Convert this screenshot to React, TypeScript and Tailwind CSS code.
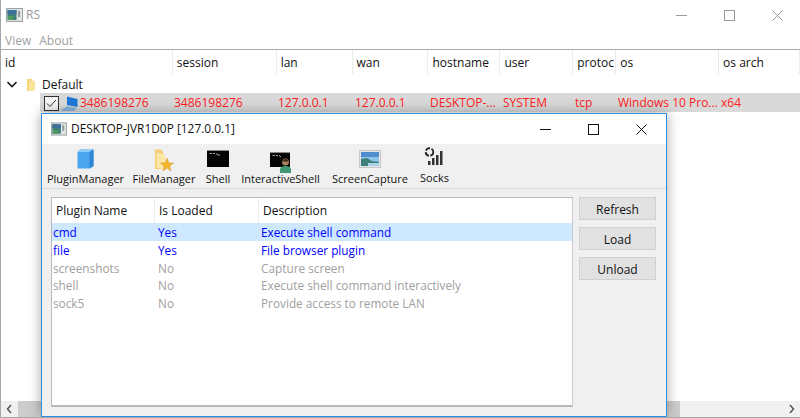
import * as React from 'react';

const FONT = "font-['Open_Sans','Noto_Sans',sans-serif]";

const hostColumns = [
  { label: 'id', width: 'w-[172px]' },
  { label: 'session', width: 'w-[104px]' },
  { label: 'lan', width: 'w-[76px]' },
  { label: 'wan', width: 'w-[76px]' },
  { label: 'hostname', width: 'w-[72px]' },
  { label: 'user', width: 'w-[73px]' },
  { label: 'protoc', width: 'w-[43px]' },
  { label: 'os', width: 'w-[103px]' },
  { label: 'os arch', width: 'w-[81px]' },
];

const plugins = [
  { name: 'cmd', loaded: true, description: 'Execute shell command', selected: true },
  { name: 'file', loaded: true, description: 'File browser plugin' },
  { name: 'screenshots', loaded: false, description: 'Capture screen' },
  { name: 'shell', loaded: false, description: 'Execute shell command interactively' },
  { name: 'sock5', loaded: false, description: 'Provide access to remote LAN' },
];

function AppIcon({ className }: { className?: string }) {
  return (
    <svg viewBox="0 0 17 14" className={className}>
      <rect x="0.5" y="0.5" width="16" height="13" fill="#dfe3e3" stroke="#9aa2a2" />
      <rect x="1.5" y="2" width="9" height="10" fill="#3f7f78" />
      <rect x="1.5" y="2" width="9" height="4" fill="#3c6f9c" />
      <rect x="2" y="8" width="5" height="4" fill="#4f9a5c" />
      <rect x="12" y="3" width="2" height="6" fill="#8f9a9a" />
    </svg>
  );
}

function WindowControls({ active }: { active?: boolean }) {
  const stroke = active ? '#111111' : '#999999';
  return (
    <div className="flex items-center">
      <svg width="11" height="11" viewBox="0 0 11 11" className="mr-[37px]">
        <path d="M0 5.5H11" stroke={stroke} />
      </svg>
      <svg width="11" height="11" viewBox="0 0 11 11" className="mr-[37px]">
        <rect x="0.5" y="0.5" width="10" height="10" fill="none" stroke={stroke} />
      </svg>
      <svg width="11" height="11" viewBox="0 0 11 11">
        <path d="M0.5 0.5L10.5 10.5M10.5 0.5L0.5 10.5" stroke={stroke} />
      </svg>
    </div>
  );
}

function FolderIcon() {
  return (
    <svg width="10" height="14" viewBox="0 0 10 14">
      <path d="M1 1H6L7 3V13H1Z" fill="#f6d77a" />
      <path d="M3 3H9V12L3 13Z" fill="#fbe39a" />
    </svg>
  );
}

function CubeIcon() {
  return (
    <svg width="17" height="20" viewBox="0 0 17 20">
      <path d="M0.5 3L3.5 0.5H16.5V17L13 19.5H0.5Z" fill="#4aa6ee" />
      <path d="M12.5 3H0.5L3.5 0.5H16.5Z" fill="#8ccbf6" />
      <path d="M12.5 3L16.5 0.5V17L12.5 19.5Z" fill="#2f86d6" />
    </svg>
  );
}

function StarFolderIcon() {
  return (
    <svg width="20" height="23" viewBox="0 0 20 23">
      <path d="M1 0.5H7L9 3V20H1Z" fill="#f3cf71" />
      <path d="M2.5 3L11 6V21L2.5 18Z" fill="#fbe6a6" />
      <path d="M13 9L14.7 14H19.5L15.6 17L17 22L13 19L9 22L10.4 17L6.5 14H11.3Z" fill="#f5b62d" stroke="#d98c1c" strokeWidth="0.5" />
    </svg>
  );
}

function TerminalIcon() {
  return (
    <svg width="22" height="17" viewBox="0 0 22 17">
      <rect x="0" y="0" width="22" height="17" fill="#050505" />
      <rect x="0" y="0" width="22" height="1" fill="#8a8a8a" />
      <path d="M2.5 3.5H5M6 3.5H8M9 3.5L11 5H13" stroke="#cfcfcf" strokeWidth="0.8" fill="none" />
    </svg>
  );
}

function InteractiveShellIcon() {
  return (
    <svg width="22" height="21" viewBox="0 0 22 21">
      <rect x="0" y="0" width="20" height="15" fill="#050505" />
      <rect x="0" y="0" width="20" height="1" fill="#8a8a8a" />
      <path d="M2.5 3.5H5M6 3.5H8M9 3.5L11 5" stroke="#cfcfcf" strokeWidth="0.8" fill="none" />
      <circle cx="15.5" cy="10" r="3.5" fill="#a97f5f" />
      <path d="M12 9.5C12 6 19 6 19 9.5Z" fill="#3b2a1f" />
      <path d="M10 21V17.5C10 15 12.5 14 15.5 14C18.5 14 21 15 21 17.5V21Z" fill="#3f9a75" />
    </svg>
  );
}

function PictureIcon() {
  return (
    <svg width="22" height="18" viewBox="0 0 22 18">
      <rect x="0.5" y="0.5" width="21" height="17" fill="#e4e4e4" stroke="#c8c8c8" />
      <rect x="2" y="2" width="18" height="14" fill="#8ec4ea" />
      <rect x="2" y="2" width="18" height="5" fill="#4f8fd0" />
      <path d="M2 9L8 8L13 11L20 12V16H2Z" fill="#3f7f7a" />
      <path d="M9 13H20V16H9Z" fill="#a7d2e8" />
    </svg>
  );
}

function SocksIcon() {
  return (
    <svg width="22" height="18" viewBox="0 0 22 18">
      <circle cx="5.5" cy="5" r="3.8" fill="none" stroke="#222222" strokeWidth="1.8" strokeDasharray="5 1.5" />
      <rect x="4" y="14" width="2.5" height="4" fill="#333333" />
      <rect x="8" y="11" width="2.5" height="7" fill="#333333" />
      <rect x="12" y="8" width="2.5" height="10" fill="#333333" />
      <rect x="16" y="4" width="2.5" height="14" fill="#333333" />
    </svg>
  );
}

function ToolButton({ label, className, iconTop, children }: { label: string; className: string; iconTop: string; children: React.ReactNode }) {
  return (
    <div className={`flex flex-col items-center ${className}`}>
      <div className={`flex h-[27px] items-start justify-center ${iconTop}`}>{children}</div>
      <span className="whitespace-nowrap text-[11px] leading-[16px] text-[#111]">{label}</span>
    </div>
  );
}

function PluginDialog() {
  return (
    <div className="absolute left-[40px] top-[113px] flex h-[304px] w-[626px] flex-col border border-[#2f8fdc] bg-[#f0f0f0] shadow-[0_0_12px_rgba(0,0,0,0.35)]">
      <div className="flex h-[30px] shrink-0 items-center bg-white pl-[9px] pr-[19px]">
        <AppIcon className="h-[14px] w-[16px]" />
        <span className="ml-[4px] text-[11.9px] text-[#111]">DESKTOP-JVR1D0P [127.0.0.1]</span>
        <div className="ml-auto">
          <WindowControls active />
        </div>
      </div>

      <div className="flex h-[45px] shrink-0 border-b border-[#d8d8d8] pl-[6px]">
        <ToolButton label="PluginManager" className="w-[75px]" iconTop="pt-[5px]"><CubeIcon /></ToolButton>
        <ToolButton label="FileManager" className="ml-[11px] w-[60px]" iconTop="pt-[5px]"><StarFolderIcon /></ToolButton>
        <ToolButton label="Shell" className="ml-[12px] w-[24px]" iconTop="pt-[6px]"><TerminalIcon /></ToolButton>
        <ToolButton label="InteractiveShell" className="ml-[11px] w-[79px]" iconTop="pt-[8px]"><InteractiveShellIcon /></ToolButton>
        <ToolButton label="ScreenCapture" className="ml-[12px] w-[76px]" iconTop="pt-[6px]"><PictureIcon /></ToolButton>
        <ToolButton label="Socks" className="ml-[11px] w-[31px] -translate-y-px" iconTop="pt-[4px]"><SocksIcon /></ToolButton>
      </div>

      <div className="flex min-h-0 flex-1 pb-[10px] pl-[9px] pt-[8px]">
        <div className="h-[210px] w-[522px] border border-[#b9b9b9] border-b-2 border-r-[#cccccc] bg-white">
          <div className="flex h-[25px] items-center text-[12px] text-[#111]">
            <div className="h-full w-[103px] border-r border-[#ececec] pl-[4px] leading-[25px]">Plugin Name</div>
            <div className="h-full w-[104px] border-r border-[#ececec] pl-[4px] leading-[25px]">Is Loaded</div>
            <div className="h-full pl-[4px] leading-[25px]">Description</div>
          </div>
          {plugins.map((plugin) => (
            <div
              key={plugin.name}
              className={`flex h-[17.7px] items-center pt-[2px] text-[11.8px] leading-[15px] ${plugin.selected ? 'bg-[#cde8ff]' : ''} ${plugin.loaded ? 'text-[#0000ff]' : 'text-[#a0a0a0]'}`}
            >
              <div className="w-[104px] pl-[1px]">{plugin.name}</div>
              <div className="w-[103px] pl-[2px]">{plugin.loaded ? 'Yes' : 'No'}</div>
              <div className="pl-[2px]">{plugin.description}</div>
            </div>
          ))}
        </div>
        <div className="ml-[6px] flex flex-col gap-[7px]">
          {['Refresh', 'Load', 'Unload'].map((label) => (
            <button
              key={label}
              type="button"
              className="h-[23px] w-[77px] border border-[#d0d0d0] bg-[#e1e1e1] pt-[2px] text-[12px] leading-[17px] text-[#111]"
            >
              {label}
            </button>
          ))}
        </div>
      </div>
    </div>
  );
}

export default function App() {
  return (
    <div className={`relative flex h-[418px] w-[800px] flex-col overflow-hidden border-b border-l border-[#a6a6a6] bg-white ${FONT}`}>
      <div className="flex h-[30px] shrink-0 items-center pl-[5px] pr-[17px]">
        <AppIcon className="h-[14px] w-[17px]" />
        <span className="ml-[3px] text-[12px] text-[#999]">RS</span>
        <div className="ml-auto">
          <WindowControls />
        </div>
      </div>

      <div className="flex h-[19px] shrink-0 items-center gap-[8px] pl-[4px] pt-[2px] text-[12px] text-[#a0a0a0]">
        <span>View</span>
        <span>About</span>
      </div>

      <div className="flex min-h-0 flex-1 flex-col border-t border-[#a9a9a9]">
        <div className="flex h-[24px] shrink-0 text-[12px] text-[#111]">
          {hostColumns.map((column) => (
            <div key={column.label} className={`${column.width} h-full border-r border-[#ececec] pl-[4px] leading-[26px]`}>
              {column.label}
            </div>
          ))}
        </div>

        <div className="flex h-[19px] shrink-0 items-center pl-[6px] pt-[2px] text-[12px] text-[#111]">
          <svg width="10" height="7" viewBox="0 0 10 7">
            <path d="M0.5 1L5 5.5L9.5 1" fill="none" stroke="#222222" strokeWidth="1.6" />
          </svg>
          <div className="ml-[9px]"><FolderIcon /></div>
          <span className="ml-[6px]">Default</span>
        </div>

        <div className="flex h-[19px] shrink-0 items-center">
          <div className="h-full w-[39px] shrink-0" />
          <div className="flex h-full flex-1 items-center bg-[#d9d9d9] pl-[4px] pt-[1px] text-[12px] text-[#ff2020]">
            <div className="flex w-[130px] items-center">
              <svg width="15" height="15" viewBox="0 0 15 15" className="shrink-0">
                <rect x="0.5" y="0.5" width="14" height="14" fill="#f4f4f4" stroke="#333333" />
                <path d="M3 7.5L6 10.5L12 4" fill="none" stroke="#333333" />
              </svg>
              <svg width="18" height="15" viewBox="0 0 18 15" className="ml-[2px] shrink-0">
                <path d="M6 0.5L16.5 3V11L6 9Z" fill="#1f78d8" />
                <path d="M0 14L6 10L16 12L13 15H2Z" fill="#8ab4dc" />
              </svg>
              <span className="ml-[1px]">3486198276</span>
            </div>
            <div className="w-[104px]">3486198276</div>
            <div className="w-[77px]">127.0.0.1</div>
            <div className="w-[75px]">127.0.0.1</div>
            <div className="w-[73px]">DESKTOP-...</div>
            <div className="w-[72px]">SYSTEM</div>
            <div className="w-[43px]">tcp</div>
            <div className="w-[103px]">Windows 10 Pro...</div>
            <div>x64</div>
          </div>
        </div>

        <div className="min-h-0 flex-1" />

        <div className="flex h-[16px] shrink-0 items-center bg-[#f0f0f0]">
          <svg width="17" height="16" viewBox="0 0 17 16" className="shrink-0">
            <path d="M10 4L6.5 8L10 12" fill="none" stroke="#555555" strokeWidth="1.5" />
          </svg>
          <div className="h-full w-[662px] bg-[#cdcdcd]" />
          <div className="flex-1" />
          <svg width="17" height="16" viewBox="0 0 17 16" className="shrink-0">
            <path d="M7 4L10.5 8L7 12" fill="none" stroke="#555555" strokeWidth="1.5" />
          </svg>
        </div>
      </div>

      <PluginDialog />
    </div>
  );
}
